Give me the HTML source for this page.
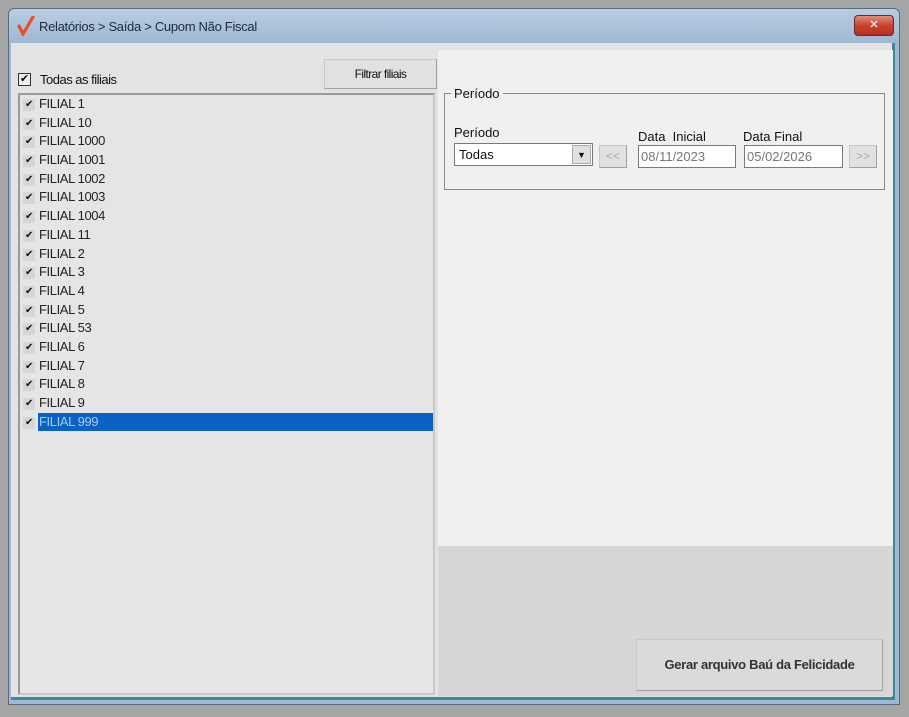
<!DOCTYPE html>
<html><head><meta charset="utf-8"><style>
*{margin:0;padding:0;box-sizing:border-box}
body{width:909px;height:717px;background:#a5a5a5;position:relative;overflow:hidden;font-family:"Liberation Sans",sans-serif;font-size:13px;color:#111}
.win{position:absolute;left:8px;top:8px;width:892px;height:697px;border:1px solid #5a6a7a;border-radius:6px 6px 0 0;background:linear-gradient(#b9cde3,#9fb8d3 34px);}
.title{position:absolute;left:30px;top:10px;font-size:13px;color:#1e2a3a;letter-spacing:-0.3px}
.close{position:absolute;left:845px;top:6px;width:40px;height:21px;border:1px solid #6b2a22;border-radius:4px;background:linear-gradient(#e09080,#c8412c 50%,#b83020);color:#e8e0e0;font-weight:bold;text-align:center;line-height:19px;font-size:11px}
.client{position:absolute;left:2px;top:34px;width:884px;height:657px;background:#e3e3e3;border-bottom:3px solid #3b8a9a;border-right:3px solid #3b8a9a}
.list{position:absolute;left:18px;top:93px;width:417px;height:602px;background:#e5e5e5;border:2px solid #9a9a9a;border-right-color:#c8c8c8;border-bottom-color:#c8c8c8}
.row{height:18.7px;line-height:18.7px;position:relative;padding-left:19px;font-size:13px;letter-spacing:-0.4px;color:#222}
.cb{position:absolute;left:3px;top:4px;width:12px;height:12px;background:#d6d6d6;font-size:10px;line-height:12px;text-align:center;color:#111;font-style:normal}
.sel span{background:#0a63c4;color:#a8c8ef;display:block;margin-left:-1px;padding-left:1px}
.right{position:absolute;left:438px;top:50px;width:455px;height:496px;background:#f0f0f0}
.bottom{position:absolute;left:438px;top:546px;width:455px;height:150px;background:#d6d6d6}
.btn{position:absolute;background:#e1e1e1;border:1px solid #c8c8c8;border-right-color:#a0a0a0;border-bottom-color:#a0a0a0;text-align:center}
fieldset{position:absolute;left:444px;top:86px;width:441px;height:104px;border:1px solid #8a8a8a;}
legend{margin-left:6px;padding:0 3px;font-size:13px}
.lbl{position:absolute;font-size:13px}
.inp{position:absolute;height:23px;background:#fff;border:1px solid #7a7a7a;font-size:13px;line-height:21px;padding-left:2px;color:#777}
</style></head><body>
<div class="win">
 <svg style="position:absolute;left:8px;top:7px" width="18" height="20" viewBox="0 0 18 20"><path d="M2 10 L6 18 L16 1" stroke="#e8502a" stroke-width="3.2" fill="none" stroke-linecap="round"/></svg>
 <div class="title">Relatórios &gt; Saída &gt; Cupom Não Fiscal</div>
 <div class="close">✕</div>
 <div class="client"></div>
</div>
<div style="position:absolute;left:18px;top:73px;width:13px;height:13px;border:1px solid #333;background:#eee;font-size:11px;line-height:11px;text-align:center">✔</div>
<div style="position:absolute;left:40px;top:72px;font-size:13px;letter-spacing:-0.5px">Todas as filiais</div>
<div class="btn" style="left:324px;top:59px;width:113px;height:30px;line-height:28px;font-size:12px;letter-spacing:-0.6px">Filtrar filiais</div>
<div class="list">
<div class="row"><i class="cb">✔</i>FILIAL 1</div>
<div class="row"><i class="cb">✔</i>FILIAL 10</div>
<div class="row"><i class="cb">✔</i>FILIAL 1000</div>
<div class="row"><i class="cb">✔</i>FILIAL 1001</div>
<div class="row"><i class="cb">✔</i>FILIAL 1002</div>
<div class="row"><i class="cb">✔</i>FILIAL 1003</div>
<div class="row"><i class="cb">✔</i>FILIAL 1004</div>
<div class="row"><i class="cb">✔</i>FILIAL 11</div>
<div class="row"><i class="cb">✔</i>FILIAL 2</div>
<div class="row"><i class="cb">✔</i>FILIAL 3</div>
<div class="row"><i class="cb">✔</i>FILIAL 4</div>
<div class="row"><i class="cb">✔</i>FILIAL 5</div>
<div class="row"><i class="cb">✔</i>FILIAL 53</div>
<div class="row"><i class="cb">✔</i>FILIAL 6</div>
<div class="row"><i class="cb">✔</i>FILIAL 7</div>
<div class="row"><i class="cb">✔</i>FILIAL 8</div>
<div class="row"><i class="cb">✔</i>FILIAL 9</div>
<div class="row sel"><i class="cb">✔</i><span>FILIAL 999</span></div>
</div>
<div class="right"></div>
<div class="bottom"></div>
<fieldset><legend>Período</legend></fieldset>
<div class="lbl" style="left:454px;top:125px">Período</div>
<div class="inp" style="left:454px;top:143px;width:139px;color:#111;padding-left:4px">Todas</div>
<div style="position:absolute;left:572px;top:145px;width:19px;height:19px;background:#e1e1e1;border:1px solid #aaa;font-size:9px;text-align:center;line-height:18px">▼</div>
<div class="btn" style="left:599px;top:145px;width:28px;height:23px;line-height:21px;color:#aaa;font-size:12px">&lt;&lt;</div>
<div class="lbl" style="left:638px;top:129px">Data&nbsp; Inicial</div>
<div class="inp" style="left:638px;top:145px;width:98px">08/11/2023</div>
<div class="lbl" style="left:743px;top:129px">Data Final</div>
<div class="inp" style="left:744px;top:145px;width:99px">05/02/2026</div>
<div class="btn" style="left:849px;top:145px;width:28px;height:23px;line-height:21px;color:#aaa;font-size:12px">&gt;&gt;</div>
<div class="btn" style="left:636px;top:639px;width:247px;height:52px;line-height:50px;font-weight:bold;font-size:13px;color:#333;letter-spacing:-0.3px;background:#dadada">Gerar arquivo Baú da Felicidade</div>
</body></html>
